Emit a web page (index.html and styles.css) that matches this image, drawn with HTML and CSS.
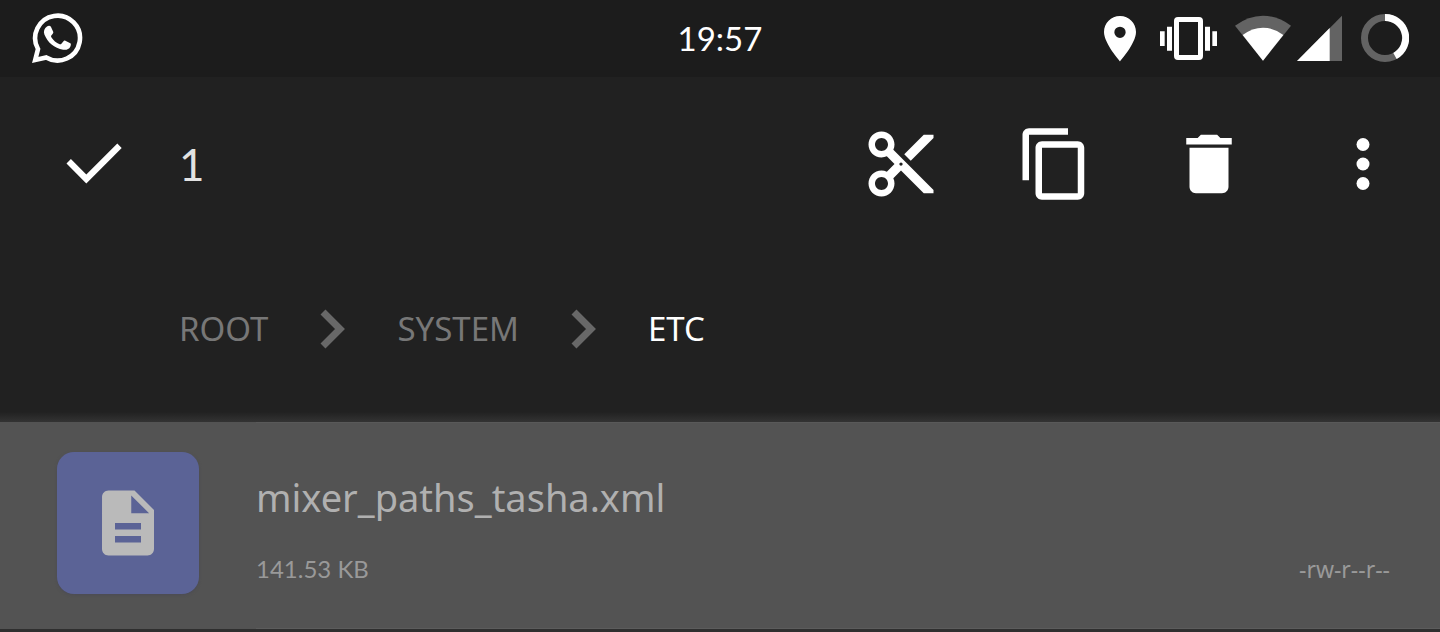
FILE: index.html
```html
<!DOCTYPE html>
<html lang="en">
<head>
<meta charset="utf-8">
<meta name="viewport" content="width=device-width, initial-scale=1">
<title>File manager</title>
<link rel="stylesheet" href="styles.css">
</head>
<body>
<div class="status">
  <svg class="chat" width="52" height="52" viewBox="0 0 52 52" fill="none" aria-hidden="true">
    <path d="M4.200 48 7 37A22.400 22.400 0 1 1 15.200 45.400Z" stroke="#fff" stroke-width="4.6"/>
    <path d="M16 14.5c1-.9 3.200-1.100 3.900.2l2.300 5c.4 1-.2 1.900-1.900 3.900-.5.6-.3 1 .2 1.800 1.900 3 4.600 5.300 8.200 6.800.8.3 1.200.2 1.700-.4l2.100-2.600c.5-.7 1.100-.8 1.900-.4l4.400 2.100c1 .5 1.200.8 1 2-.6 4.100-4.300 5.300-7.600 4.900-9-1.400-15.600-7.300-18.800-15.200-1.200-3.200 0-6.200 2.600-8.100z" fill="#fff"/>
  </svg>
  <time class="clock">19:57</time>
  <div class="indicators">
    <svg width="38" height="48" viewBox="72 42 114 144" fill="#fff" aria-hidden="true"><path fill-rule="evenodd" d="M120 48c-27 0-48 21-48 48 0 34 48 88 48 88s48-54 48-88c0-27-21-48-48-48zm0 32a17 17 0 1 1 0 34 17 17 0 0 1 0-34z"/></svg>
    <svg width="57" height="48" viewBox="240 42 171 144" fill="#fff" aria-hidden="true"><path d="M240 94h14v44h-14zM261 80h15v72h-15zM375 80h15v72h-15zM397 94h14v44h-14z"/><path fill-rule="evenodd" d="M294 51h63q12 0 12 12v105q0 12-12 12h-63q-12 0-12-12V63q0-12 12-12zm3 15v99h57V66z"/></svg>
    <div class="network">
      <svg width="56" height="48" viewBox="465 42 168 144" aria-hidden="true"><path d="M465 77Q505 47 549 47T633 77L549 182z" fill="#636363"/><path d="M488 105Q517 83 549 83T610 105L549 182z" fill="#fff"/></svg>
      <svg width="46" height="48" viewBox="651 42 138 144" aria-hidden="true"><path d="M651 183 786 47V183z" fill="#636363"/><path d="M651 183 749 84V183z" fill="#fff"/></svg>
    </div>
    <svg width="48" height="48" viewBox="843 42 144 144" fill="none" stroke-width="21" aria-hidden="true"><circle cx="915" cy="114" r="61.5" stroke="#636363"/><path d="M915 52.5A61.5 61.5 0 0 1 945 168" stroke="#fff"/></svg>
  </div>
</div>

<header class="header">
  <div class="toolbar">
    <button class="tool" type="button" aria-label="Done"><svg viewBox="0 0 78 78"><path d="M11.500 38.500 15.900 34.100 31.300 49.500 62.300 18.500 66.700 22.900 31.300 58.500z"/></svg></button>
    <span class="count">1</span>
    <div class="actions">
      <button class="tool" type="button" aria-label="Cut"><svg viewBox="0 0 24 24"><path d="M9.640 7.640c.23-.5.36-1.050.36-1.640 0-2.210-1.790-4-4-4S2 3.790 2 6s1.790 4 4 4c.59 0 1.140-.13 1.640-.36L10 12l-2.360 2.360C7.140 14.130 6.590 14 6 14c-2.210 0-4 1.790-4 4s1.790 4 4 4 4-1.790 4-4c0-.59-.13-1.140-.36-1.640L12 14l7 7h3v-1L9.640 7.640zM6 8c-1.100 0-2-.89-2-2s.9-2 2-2 2 .89 2 2-.9 2-2 2zm0 12c-1.100 0-2-.89-2-2s.9-2 2-2 2 .89 2 2-.9 2-2 2zm6-7.500c-.28 0-.5-.22-.5-.5s.22-.5.5-.5.500.22.500.500-.22.500-.500.500zM19 3l-6 6 2 2 7-7V3z"/></svg></button>
      <button class="tool" type="button" aria-label="Copy"><svg viewBox="0 0 24 24"><path d="M16 1H4c-1.100 0-2 .9-2 2v14h2V3h12V1zm3 4H8c-1.100 0-2 .9-2 2v14c0 1.100.9 2 2 2h11c1.100 0 2-.9 2-2V7c0-1.100-.9-2-2-2zm0 16H8V7h11v14z"/></svg></button>
      <button class="tool" type="button" aria-label="Delete"><svg viewBox="0 0 24 24"><path d="M6 19c0 1.100.9 2 2 2h8c1.100 0 2-.9 2-2V7H6v12zM19 4h-3.500l-1-1h-5l-1 1H5v2h14V4z"/></svg></button>
      <button class="tool" type="button" aria-label="More options"><svg viewBox="0 0 24 24"><circle cx="12" cy="6" r="2"/><circle cx="12" cy="12" r="2"/><circle cx="12" cy="18" r="2"/></svg></button>
    </div>
  </div>
  <nav class="crumbs" aria-label="Path">
    <a href="#root">ROOT</a>
    <svg width="25" height="40" viewBox="0 0 25 40" aria-hidden="true"><path d="M3 3 20 20 3 37"/></svg>
    <a href="#system">SYSTEM</a>
    <svg width="25" height="40" viewBox="0 0 25 40" aria-hidden="true"><path d="M3 3 20 20 3 37"/></svg>
    <a class="current" href="#etc" aria-current="page">ETC</a>
  </nav>
</header>

<main class="files">
  <article class="file">
    <div class="tile"><svg width="78" height="78" viewBox="0 0 24 24" aria-hidden="true"><path d="M14 2H6c-1.100 0-1.990.9-1.990 2L4 20c0 1.100.89 2 1.990 2H18c1.100 0 2-.9 2-2V8l-6-6zm2 16H8v-2h8v2zm0-4H8v-2h8v2zm-3-5V3.500L18.500 9H13z"/></svg></div>
    <div class="info">
      <h1 class="name">mixer_paths_tasha.xml</h1>
      <div class="meta"><span class="size">141.53 KB</span><span class="mode">-rw-r--r--</span></div>
    </div>
  </article>
</main>
</body>
</html>
```
FILE: styles.css
```css
* { box-sizing: border-box; }

body {
  margin: 0;
  min-height: 100vh;
  background: #2f2f2f;
  color: #fff;
  font-family: "Noto Sans", sans-serif;
}

.status {
  display: grid;
  grid-template-columns: 1fr auto 1fr;
  align-items: center;
  height: 77px;
  padding: 0 31px 2px;
  background: #1c1c1c;
}

.clock {
  font: 33px/40px Lato, sans-serif;
}

.indicators {
  display: flex;
  justify-content: flex-end;
  gap: 18px;
}

.network {
  display: flex;
  gap: 6px;
}

.header {
  padding: 48px 38px 61px 55px;
  background: #212121;
}

.toolbar {
  display: flex;
  align-items: center;
}

.tool {
  width: 78px;
  height: 78px;
  padding: 0;
  border: 0;
  background: none;
  color: inherit;
  cursor: pointer;
}

.tool svg {
  display: block;
  width: 100%;
  height: 100%;
  fill: currentColor;
}

.count {
  margin-left: 46px;
  color: #e2e2e2;
  font: 44px/52px Lato, sans-serif;
}

.actions {
  display: flex;
  gap: 76px;
  margin-left: auto;
}

.crumbs {
  display: flex;
  align-items: center;
  gap: 52px;
  margin-top: 104px;
  padding-left: 124px;
  font-size: 33px;
  line-height: 44px;
}

.crumbs a {
  color: #777;
  text-decoration: none;
}

.crumbs .current { color: #fff; }

.crumbs svg {
  fill: none;
  stroke: #686868;
  stroke-width: 7px;
}

.files {
  padding-top: 10px;
  background: linear-gradient(#212121, #333 10px);
}

.file {
  display: flex;
  gap: 57px;
  min-height: 207px;
  padding-left: 57px;
  background: #535353;
}

.tile {
  display: grid;
  place-items: center;
  width: 142px;
  height: 142px;
  margin-top: 30px;
  border-radius: 17px;
  background: #5b6396;
  box-shadow: 0 1px 3px #4b4b55;
}

.tile svg { fill: #bababa; }

.info {
  flex: 1;
  display: flex;
  flex-direction: column;
  gap: 30px;
  padding: 48px 50px 0 0;
  border-top: 1px solid #595959;
  border-bottom: 1px solid #5c5c5c;
}

.name {
  margin: 0;
  color: #b0b0b0;
  font-size: 38px;
  font-weight: 400;
  line-height: 52px;
}

.meta {
  display: flex;
  justify-content: space-between;
  color: #999;
  font-size: 23px;
  line-height: 32px;
}

.size {
  font-family: Lato, sans-serif;
  font-size: 24px;
}
```
